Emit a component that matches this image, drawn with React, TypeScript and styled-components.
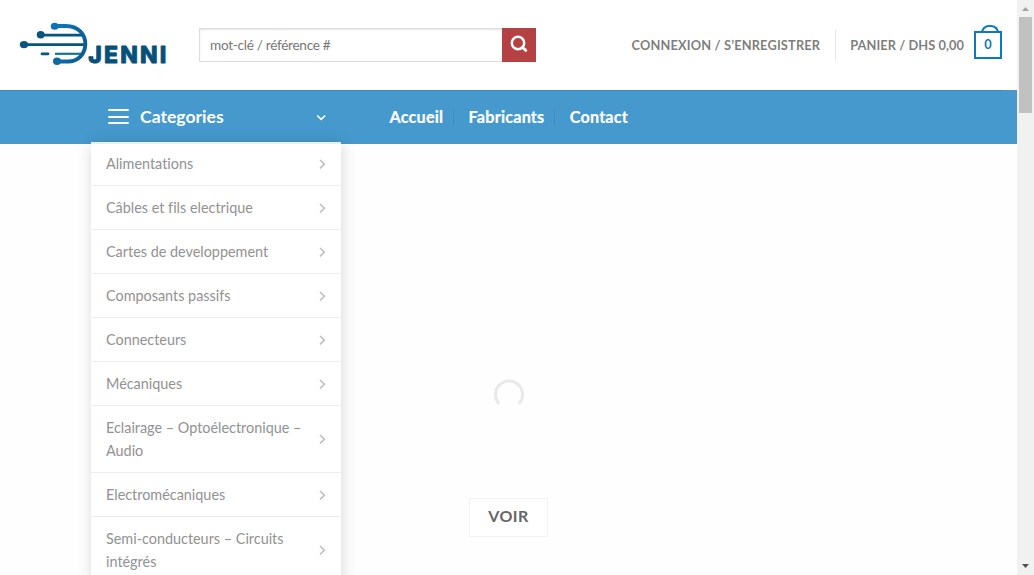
import React from "react";
import styled, { createGlobalStyle } from "styled-components";

const GlobalStyle = createGlobalStyle`
  * { box-sizing: border-box; }
  html, body { margin: 0; padding: 0; overflow: hidden; background: #fff; }
  body {
    font-family: Lato, "Liberation Sans", sans-serif;
    font-variant-ligatures: none;
    color: #777;
  }
`;

const Window = styled.div`
  display: flex;
  width: 1034px;
  height: 575px;
  overflow: hidden;
`;

const Page = styled.div`
  width: 1017px;
  height: 575px;
  display: flex;
  flex-direction: column;
`;

const Header = styled.header`
  height: 90px;
  flex: none;
  display: flex;
  align-items: center;
  padding: 0 15px;
`;

const Logo = styled.svg`
  display: block;
  width: 154px;
  height: 60px;
  margin-right: 30px;
  flex: none;
`;

const SearchForm = styled.div`
  display: flex;
  width: 337px;
  height: 34px;
`;

const SearchField = styled.input`
  flex: 1;
  min-width: 0;
  height: 34px;
  padding: 0 10px 1px;
  border: 1px solid #ddd;
  border-right: 0;
  border-radius: 0;
  box-shadow: inset 0 1px 2px rgba(0, 0, 0, 0.1);
  font: 400 13.6px Lato, sans-serif;
  letter-spacing: -0.29px;
  color: #333;
  outline: none;
  &::placeholder { color: #777; opacity: 1; }
`;

const SearchButton = styled.button`
  width: 34px;
  height: 34px;
  padding: 0 0 2px;
  border: 0;
  background: #b64142;
  display: flex;
  align-items: center;
  justify-content: center;
`;

const Account = styled.div`
  margin-left: auto;
  display: flex;
  align-items: center;
`;

const AccountLink = styled.a<{ $tracking: number }>`
  font-size: 12.8px;
  font-weight: 700;
  letter-spacing: ${(p) => p.$tracking}px;
  text-transform: uppercase;
  color: rgba(102, 102, 102, 0.85);
  white-space: nowrap;
`;

const Divider = styled.span`
  width: 1px;
  height: 30px;
  margin: 0 14px 0 15px;
  background: #e5e5e5;
`;

const CartBag = styled.span`
  position: relative;
  width: 28px;
  height: 28px;
  margin-left: 10px;
  border: 2px solid #0b7bbf;
  display: flex;
  align-items: center;
  justify-content: center;
  font-size: 12.8px;
  font-weight: 700;
  color: #0b7bbf;
  padding-bottom: 2px;
  &::after {
    content: "";
    position: absolute;
    left: 5px;
    top: -8px;
    width: 14px;
    height: 6px;
    border: 2px solid #0b7bbf;
    border-bottom: 0;
    border-radius: 8px 8px 0 0;
  }
`;

const NavBar = styled.nav`
  height: 54px;
  flex: none;
  background: #4699cd;
  display: flex;
  align-items: stretch;
  padding-left: 91px;
  background-image: linear-gradient(#4388b4, #4388b4);
  background-size: 1002px 1px;
  background-repeat: no-repeat;
`;

const CategoriesToggle = styled.div`
  position: relative;
  width: 250px;
  display: flex;
  align-items: center;
  padding: 0 14px 1px 16px;
  color: #fff;
  font-size: 17.6px;
  font-weight: 700;
`;

const ToggleLabel = styled.span`
  flex: 1;
  margin-left: 11px;
`;

const NavLinks = styled.div`
  display: flex;
  align-items: center;
  margin-left: 48.5px;
`;

const NavLink = styled.a<{ $first?: boolean }>`
  height: 15px;
  display: flex;
  align-items: center;
  font-size: 16.2px;
  font-weight: 700;
  letter-spacing: 0.2px;
  color: #fff;
  -webkit-text-stroke: 0.2px #fff;
  padding-left: ${(p) => (p.$first ? 0 : 14.3)}px;
  padding-right: 10px;
  padding-bottom: 2px;
  & + & { border-left: 1px solid #3e8bbd; }
`;

const Menu = styled.ul`
  position: absolute;
  top: 52px;
  left: 0;
  width: 250px;
  margin: 0;
  padding: 0;
  list-style: none;
  background: #fff;
  box-shadow: 1px 1px 15px rgba(0, 0, 0, 0.15);
  &::before {
    content: "";
    position: absolute;
    top: 0;
    left: 0;
    right: 0;
    height: 2px;
    background: #e3f0f8;
  }
`;

const MenuItem = styled.li`
  display: flex;
  align-items: center;
  padding: 10px 14px 10px 15px;
  font-size: 14.4px;
  font-weight: 400;
  line-height: 23px;
  color: #929292;
  & + & { border-top: 1px solid #ececec; }
`;

const MenuLabel = styled.span`
  flex: 1;
  max-width: 202px;
  margin-right: auto;
`;

const Hero = styled.main`
  flex: 1;
  display: flex;
  flex-direction: column;
  align-items: center;
  background: #fefefe;
  padding-top: 235px;
`;

const Spinner = styled.svg`
  display: block;
  width: 30px;
  height: 30px;
`;

const ViewButton = styled.a`
  margin-top: 89px;
  width: 79px;
  height: 39px;
  border: 1px solid #f2f2f2;
  background: #fff;
  display: flex;
  align-items: center;
  justify-content: center;
  font-size: 16px;
  font-weight: 700;
  letter-spacing: 0.4px;
  color: #666;
  padding-bottom: 4px;
`;

const ScrollTrack = styled.div`
  width: 17px;
  height: 575px;
  background: #f1f1f1;
  display: flex;
  flex-direction: column;
  align-items: center;
`;

const ScrollArrow = styled.svg`
  display: block;
  width: 17px;
  height: 17px;
  flex: none;
`;

const ScrollThumb = styled.div`
  width: 13px;
  height: 96px;
  margin-bottom: auto;
  background: #c1c1c1;
`;

const categories = [
  "Alimentations",
  "Câbles et fils electrique",
  "Cartes de developpement",
  "Composants passifs",
  "Connecteurs",
  "Mécaniques",
  "Eclairage – Optoélectronique – Audio",
  "Electromécaniques",
  "Semi-conducteurs – Circuits intégrés",
];

const DjenniLogo = () => (
  <Logo viewBox="15 15 154 60" aria-label="Djenni">
    <defs>
      <linearGradient id="arc" x1="0" y1="0" x2="1" y2="0.6">
        <stop offset="0" stopColor="#0d78bd" />
        <stop offset="1" stopColor="#0a5f94" />
      </linearGradient>
    </defs>
    <g fill="none">
      <path d="M38 35.2H83M26 44.7H84" stroke="#06547f" strokeWidth="2.7" />
      <path d="M42 53.8H48" stroke="#06547f" strokeWidth="2.8" strokeLinecap="round" />
      <path d="M55 53.8H82" stroke="#12758c" strokeWidth="2.2" />
      <path
        d="M55 26H66C78.5 26 85.3 34.5 85.3 44C85.3 53.5 78.5 61.5 68 61.5H57"
        stroke="url(#arc)"
        strokeWidth="3.9"
      />
    </g>
    <ellipse cx="54.7" cy="26.3" rx="3.9" ry="3.5" fill="#0d73b5" />
    <ellipse cx="40.7" cy="34.8" rx="4" ry="3.7" fill="#06547f" />
    <ellipse cx="24" cy="44.6" rx="4.2" ry="3.7" fill="#06547f" />
    <ellipse cx="57" cy="61.2" rx="4" ry="3.7" fill="#0b699f" />
    <text
      x="88.3"
      y="63"
      textLength="78"
      lengthAdjust="spacing"
      fontFamily="Inter, sans-serif"
      fontWeight="800"
      fontSize="23"
      fill="#06507a"
      stroke="#06507a"
      strokeWidth="0.8"
      strokeLinejoin="round"
    >
      JENNI
    </text>
  </Logo>
);

const SearchIcon = () => (
  <svg width="18" height="18" viewBox="0 0 18 18" fill="none" stroke="#fff">
    <circle cx="8" cy="8" r="6.2" strokeWidth="2.5" />
    <path d="M12.3 12.2L15.8 15.4" strokeWidth="2.8" strokeLinecap="round" />
  </svg>
);

const BurgerIcon = () => (
  <svg width="22" height="16" viewBox="0 0 22 16" stroke="#fff" strokeWidth="1.9" strokeLinecap="round">
    <path d="M2 1H21M2 8H21M2 14H21" />
  </svg>
);

const ChevronDown = () => (
  <svg width="12" height="10" viewBox="0 0 12 10" fill="none" stroke="#fff" strokeWidth="1.7">
    <path d="M2.2 3.5L6.2 7.3L10.2 3.5" />
  </svg>
);

const ChevronRight = () => (
  <svg width="10" height="12" viewBox="0 0 10 12" fill="none" stroke="#bdbdbd" strokeWidth="1.5">
    <path d="M3 2L7.4 6.2L3 10.4" />
  </svg>
);

export default function App() {
  return (
    <>
      <GlobalStyle />
      <Window>
        <Page>
          <Header>
            <DjenniLogo />
            <SearchForm>
              <SearchField placeholder="mot-clé / référence #" />
              <SearchButton aria-label="Recherche">
                <SearchIcon />
              </SearchButton>
            </SearchForm>
            <Account>
              <AccountLink $tracking={0.17}>Connexion / S’enregistrer</AccountLink>
              <Divider />
              <AccountLink $tracking={0.07}>Panier / DHS 0,00</AccountLink>
              <CartBag>0</CartBag>
            </Account>
          </Header>
          <NavBar>
            <CategoriesToggle>
              <BurgerIcon />
              <ToggleLabel>Categories</ToggleLabel>
              <ChevronDown />
              <Menu>
                {categories.map((name) => (
                  <MenuItem key={name}>
                    <MenuLabel>{name}</MenuLabel>
                    <ChevronRight />
                  </MenuItem>
                ))}
              </Menu>
            </CategoriesToggle>
            <NavLinks>
              <NavLink $first>Accueil</NavLink>
              <NavLink>Fabricants</NavLink>
              <NavLink>Contact</NavLink>
            </NavLinks>
          </NavBar>
          <Hero>
            <Spinner viewBox="0 0 30 30">
              <path d="M5.2 24.8A13.5 13.5 0 1 1 24.8 24.8" fill="none" stroke="#e9e9e9" strokeWidth="3" />
            </Spinner>
            <ViewButton>VOIR</ViewButton>
          </Hero>
        </Page>
        <ScrollTrack>
          <ScrollArrow viewBox="0 0 17 17">
            <path d="M5 11L8.5 7L12 11Z" fill="#a3a3a3" />
          </ScrollArrow>
          <ScrollThumb />
          <ScrollArrow viewBox="0 0 17 17">
            <path d="M5 6L8.5 10L12 6Z" fill="#505050" />
          </ScrollArrow>
        </ScrollTrack>
      </Window>
    </>
  );
}
